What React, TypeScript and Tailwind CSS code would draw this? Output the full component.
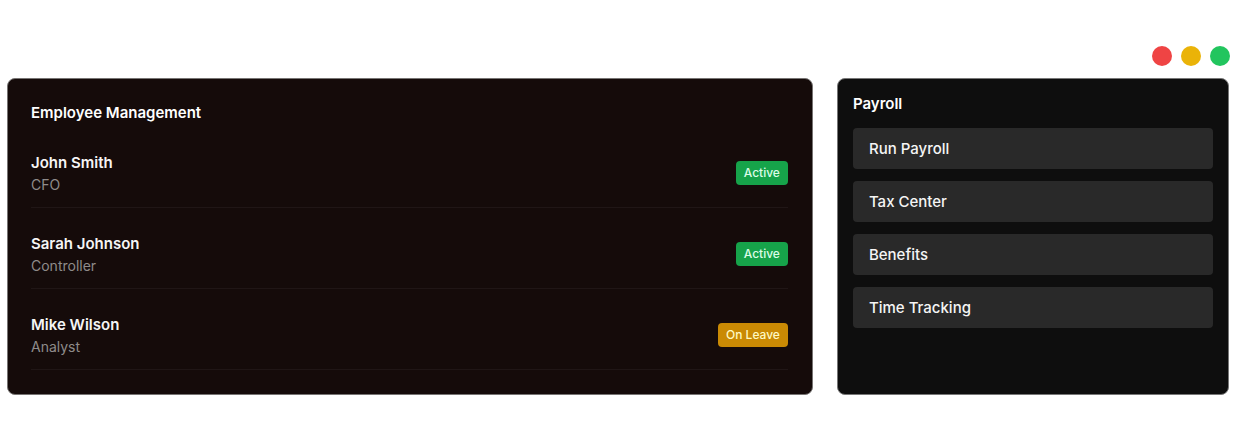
import React from 'react';

interface Employee {
  name: string;
  role: string;
  status: 'Active' | 'On Leave';
}

const employees: Employee[] = [
  { name: 'John Smith', role: 'CFO', status: 'Active' },
  { name: 'Sarah Johnson', role: 'Controller', status: 'Active' },
  { name: 'Mike Wilson', role: 'Analyst', status: 'On Leave' }
];

const payrollActions = ['Run Payroll', 'Tax Center', 'Benefits', 'Time Tracking'];

const App: React.FC = () => {
  return (
    <div className="bg-white pt-[46px] px-[7px] font-['Inter',sans-serif]">
      <div className="flex justify-end gap-[9px] -mr-px mb-3">
        <span className="w-5 h-5 rounded-full bg-[#ef4444]" />
        <span className="w-5 h-5 rounded-full bg-[#eab308]" />
        <span className="w-5 h-5 rounded-full bg-[#22c55e]" />
      </div>

      <div className="grid grid-cols-[37fr_18fr] gap-6">
        <section className="rounded-lg bg-[#150b0a] border border-[#777473] px-6 pl-[23px] pt-[22px] pb-6">
          <h2 className="text-[15px] leading-6 font-semibold text-white mb-[14px]">Employee Management</h2>
          <ul>
            {employees.map((employee) => (
              <li
                key={employee.name}
                className="flex items-center justify-between pt-3 pb-3 mb-3 last:mb-0 border-b border-[#201616]"
              >
                <div>
                  <p className="text-[15px] leading-6 font-semibold text-[#f5f5f5]">{employee.name}</p>
                  <p className="text-sm leading-5 text-[#8f8b8a]">{employee.role}</p>
                </div>
                <span
                  className={`rounded px-2 py-1 text-xs font-medium ${
                    employee.status === 'Active' ? 'bg-[#16a34a] text-green-100' : 'bg-[#ca8a04] text-yellow-100'
                  }`}
                >
                  {employee.status}
                </span>
              </li>
            ))}
          </ul>
        </section>

        <section className="rounded-lg bg-[#0e0e0e] border border-[#777777] px-[15px] pt-[13px] pb-4">
          <h2 className="text-[15px] leading-6 font-semibold text-white mb-3">Payroll</h2>
          <div className="flex flex-col gap-3">
            {payrollActions.map((action) => (
              <button
                key={action}
                type="button"
                className="w-full rounded bg-[#292929] px-4 py-2 text-left text-[15px] leading-[25px] font-medium text-[#f5f5f5]"
              >
                {action}
              </button>
            ))}
          </div>
        </section>
      </div>
    </div>
  );
};

export default App;
